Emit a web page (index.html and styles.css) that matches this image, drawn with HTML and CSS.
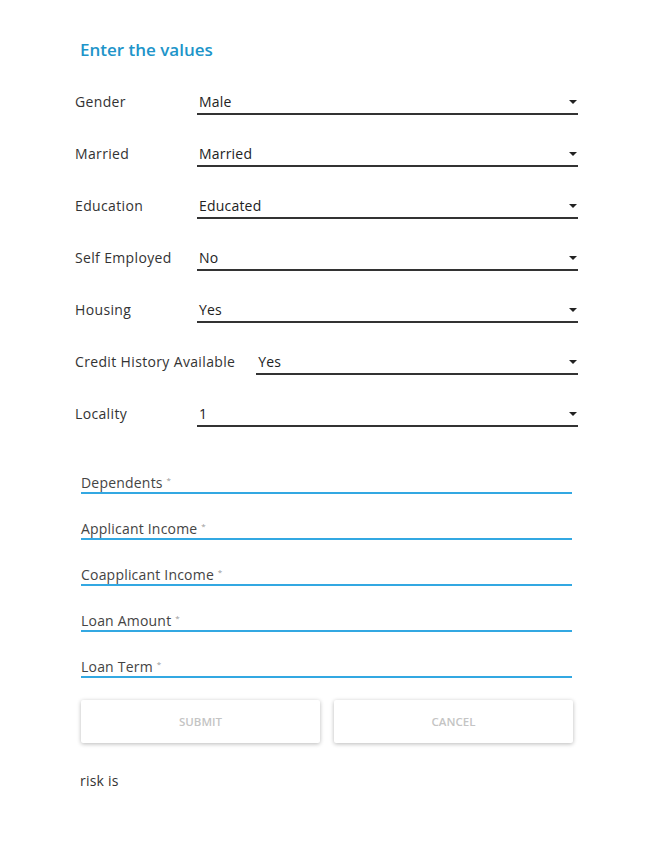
FILE: index.html
```html
<!DOCTYPE html>
<html>
<head>
<meta charset="utf-8">
<link rel="stylesheet" href="styles.css">
</head>
<body>
<div class="page">
  <h1 class="title">Enter the values</h1>
  <div class="selects">
    <div class="row"><span class="lbl">Gender</span><div class="sel"><span>Male</span><i class="arrow"></i></div></div>
    <div class="row"><span class="lbl">Married</span><div class="sel"><span>Married</span><i class="arrow"></i></div></div>
    <div class="row"><span class="lbl">Education</span><div class="sel"><span>Educated</span><i class="arrow"></i></div></div>
    <div class="row"><span class="lbl">Self Employed</span><div class="sel"><span>No</span><i class="arrow"></i></div></div>
    <div class="row"><span class="lbl">Housing</span><div class="sel"><span>Yes</span><i class="arrow"></i></div></div>
    <div class="row"><span class="lbl">Credit History Available</span><div class="sel"><span>Yes</span><i class="arrow"></i></div></div>
    <div class="row"><span class="lbl">Locality</span><div class="sel"><span>1</span><i class="arrow"></i></div></div>
  </div>
  <div class="fields">
    <div class="field">Dependents <sup>*</sup></div>
    <div class="field">Applicant Income <sup>*</sup></div>
    <div class="field">Coapplicant Income <sup>*</sup></div>
    <div class="field">Loan Amount <sup>*</sup></div>
    <div class="field">Loan Term <sup>*</sup></div>
  </div>
  <div class="buttons">
    <button class="btn">Submit</button>
    <button class="btn">Cancel</button>
  </div>
  <p class="result">risk is</p>
</div>
</body>
</html>
```
FILE: styles.css
```css
html, body {
  margin: 0;
  padding: 0;
  background: #fff;
}
body {
  font-family: "Open Sans", "Noto Sans", sans-serif;
  font-size: 14px;
  letter-spacing: 0.2px;
  color: #333;
}
.page {
  padding: 38px 87px 0 75px;
}
.title {
  margin: 0 0 27px 5px;
  font-size: 17px;
  line-height: 24px;
  font-weight: 600;
  color: #2094c9;
  letter-spacing: 0;
}
.selects {
  display: flex;
  flex-direction: column;
  gap: 26px;
}
.row {
  display: flex;
  align-items: flex-start;
}
.lbl {
  min-width: 101px;
  margin-right: 21px;
  padding-top: 3px;
  line-height: 20px;
  color: #333;
  letter-spacing: 0.35px;
  white-space: nowrap;
}
.sel {
  flex: 1;
  display: flex;
  align-items: center;
  padding: 3px 1px 1px 2px;
  line-height: 20px;
  border-bottom: 2px solid #333;
  color: #222;
}
.arrow {
  margin-left: auto;
  width: 0;
  height: 0;
  border-left: 4px solid transparent;
  border-right: 4px solid transparent;
  border-top: 4px solid #222;
}
.fields {
  display: flex;
  flex-direction: column;
  gap: 26px;
  margin: 47px 0 0 6px;
  width: 491px;
}
.field {
  height: 18px;
  line-height: 18px;
  border-bottom: 2px solid #33a8e2;
  color: #444;
  white-space: nowrap;
}
.field sup {
  font-size: 8px;
  line-height: 0;
  color: #999;
  vertical-align: 5px;
}
.buttons {
  display: flex;
  gap: 14px;
  margin: 22px 0 0 6px;
  width: 492px;
}
.btn {
  flex: 1;
  height: 43px;
  border: none;
  border-radius: 2px;
  background: #fff;
  box-shadow: 0 1px 4px rgba(0, 0, 0, 0.28);
  font-family: inherit;
  font-size: 11.5px;
  font-weight: 600;
  color: #c4c4c4;
  text-transform: uppercase;
}
.result {
  margin: 28px 0 0 5px;
  line-height: 20px;
}
```
